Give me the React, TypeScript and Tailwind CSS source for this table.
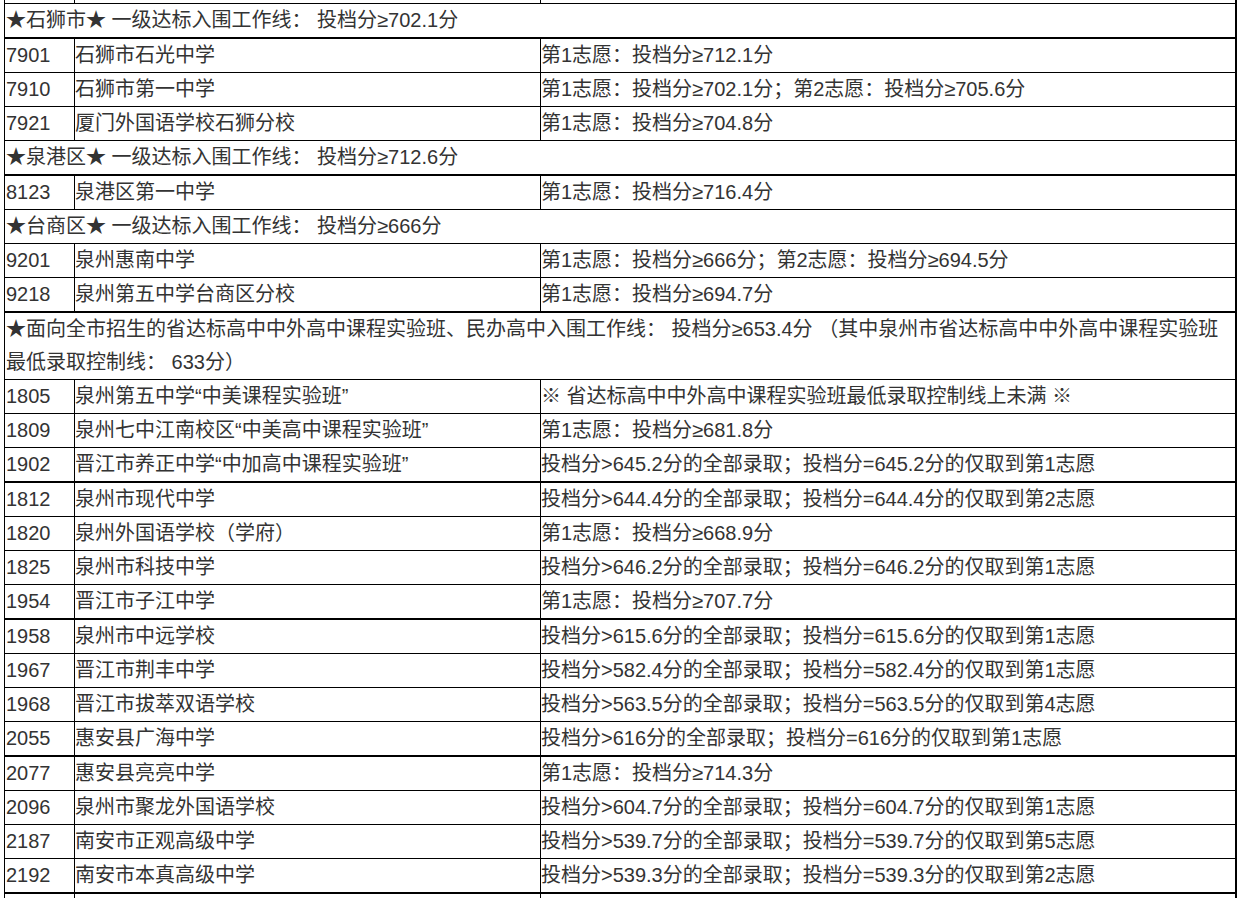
import React from 'react';

type Row =
  | { kind: 'head'; text: React.ReactNode; thick?: boolean }
  | { kind: 'item'; code: string; name: string; note: string; thick?: boolean };

const ROWS: Row[] = [
  { kind: 'head', text: '★石狮市★ 一级达标入围工作线： 投档分≥702.1分', thick: true },
  { kind: 'item', code: '7901', name: '石狮市石光中学', note: '第1志愿：投档分≥712.1分' },
  { kind: 'item', code: '7910', name: '石狮市第一中学', note: '第1志愿：投档分≥702.1分；第2志愿：投档分≥705.6分' },
  { kind: 'item', code: '7921', name: '厦门外国语学校石狮分校', note: '第1志愿：投档分≥704.8分' },
  { kind: 'head', text: '★泉港区★ 一级达标入围工作线： 投档分≥712.6分', thick: true },
  { kind: 'item', code: '8123', name: '泉港区第一中学', note: '第1志愿：投档分≥716.4分' },
  { kind: 'head', text: '★台商区★ 一级达标入围工作线： 投档分≥666分' },
  { kind: 'item', code: '9201', name: '泉州惠南中学', note: '第1志愿：投档分≥666分；第2志愿：投档分≥694.5分' },
  { kind: 'item', code: '9218', name: '泉州第五中学台商区分校', note: '第1志愿：投档分≥694.7分', thick: true },
  {
    kind: 'head',
    text: (
      <>
        ★面向全市招生的省达标高中中外高中课程实验班、民办高中入围工作线： 投档分≥653.4分 （其中泉州市省达标高中中外高中课程实验班
        <br />
        最低录取控制线： 633分）
      </>
    ),
  },
  { kind: 'item', code: '1805', name: '泉州第五中学“中美课程实验班”', note: '※ 省达标高中中外高中课程实验班最低录取控制线上未满 ※' },
  { kind: 'item', code: '1809', name: '泉州七中江南校区“中美高中课程实验班”', note: '第1志愿：投档分≥681.8分' },
  { kind: 'item', code: '1902', name: '晋江市养正中学“中加高中课程实验班”', note: '投档分>645.2分的全部录取；投档分=645.2分的仅取到第1志愿', thick: true },
  { kind: 'item', code: '1812', name: '泉州市现代中学', note: '投档分>644.4分的全部录取；投档分=644.4分的仅取到第2志愿' },
  { kind: 'item', code: '1820', name: '泉州外国语学校（学府）', note: '第1志愿：投档分≥668.9分' },
  { kind: 'item', code: '1825', name: '泉州市科技中学', note: '投档分>646.2分的全部录取；投档分=646.2分的仅取到第1志愿' },
  { kind: 'item', code: '1954', name: '晋江市子江中学', note: '第1志愿：投档分≥707.7分', thick: true },
  { kind: 'item', code: '1958', name: '泉州市中远学校', note: '投档分>615.6分的全部录取；投档分=615.6分的仅取到第1志愿' },
  { kind: 'item', code: '1967', name: '晋江市荆丰中学', note: '投档分>582.4分的全部录取；投档分=582.4分的仅取到第1志愿' },
  { kind: 'item', code: '1968', name: '晋江市拔萃双语学校', note: '投档分>563.5分的全部录取；投档分=563.5分的仅取到第4志愿' },
  { kind: 'item', code: '2055', name: '惠安县广海中学', note: '投档分>616分的全部录取；投档分=616分的仅取到第1志愿', thick: true },
  { kind: 'item', code: '2077', name: '惠安县亮亮中学', note: '第1志愿：投档分≥714.3分' },
  { kind: 'item', code: '2096', name: '泉州市聚龙外国语学校', note: '投档分>604.7分的全部录取；投档分=604.7分的仅取到第1志愿' },
  { kind: 'item', code: '2187', name: '南安市正观高级中学', note: '投档分>539.7分的全部录取；投档分=539.7分的仅取到第5志愿' },
  { kind: 'item', code: '2192', name: '南安市本真高级中学', note: '投档分>539.3分的全部录取；投档分=539.3分的仅取到第2志愿', thick: true },
];

const App: React.FC = () => {
  return (
    <div className="h-[898px] overflow-hidden bg-white">
      <table className="ml-[4px] w-[1233px] table-fixed border-collapse text-[20px] leading-[33px] text-[#333] font-['Liberation_Sans','Noto_Sans_CJK_SC',sans-serif]">
        <colgroup>
          <col className="w-[70px]" />
          <col className="w-[466px]" />
          <col />
        </colgroup>
        <tbody>
          {/* tail of the row above, cut off by the top edge */}
          <tr>
            <td className="h-[3px] border border-t-0 border-black p-0" />
            <td className="h-[3px] border border-t-0 border-black p-0" />
            <td className="h-[3px] border border-t-0 border-r-2 border-black p-0" />
          </tr>
          {ROWS.map((row, i) => {
            const b = row.thick ? 'border-b-2' : '';
            if (row.kind === 'head') {
              return (
                <tr key={i}>
                  <td colSpan={3} className={`border border-r-2 border-black p-0 pl-px align-middle ${b}`}>
                    {row.text}
                  </td>
                </tr>
              );
            }
            return (
              <tr key={i}>
                <td className={`border border-black p-0 pl-px align-middle whitespace-nowrap ${b}`}>{row.code}</td>
                <td className={`border border-black p-0 align-middle whitespace-nowrap ${b}`}>{row.name}</td>
                <td className={`border border-r-2 border-black p-0 align-middle whitespace-nowrap ${b}`}>{row.note}</td>
              </tr>
            );
          })}
          {/* start of the next row, cut off by the bottom edge */}
          <tr>
            <td className="h-[30px] border border-b-0 border-black p-0" />
            <td className="h-[30px] border border-b-0 border-black p-0" />
            <td className="h-[30px] border border-b-0 border-r-2 border-black p-0" />
          </tr>
        </tbody>
      </table>
    </div>
  );
};

export default App;
